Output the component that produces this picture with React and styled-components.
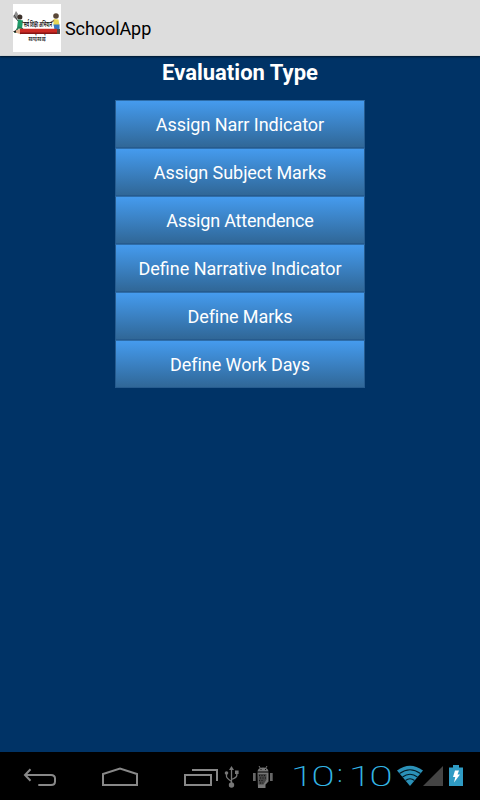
import React from 'react'
import styled, { createGlobalStyle } from 'styled-components'

const GlobalStyle = createGlobalStyle`
  * {
    box-sizing: border-box;
  }
  body {
    margin: 0;
    background: #003366;
    font-family: Roboto, "Noto Sans", sans-serif;
  }
`

const Screen = styled.div`
  display: flex;
  flex-direction: column;
  width: 480px;
  height: 800px;
  background: #003366;
  overflow: hidden;
`

const ActionBar = styled.header`
  display: flex;
  align-items: center;
  flex: none;
  height: 56px;
  padding: 0 13px;
  background: #dddddd;
  border-bottom: 1px solid #d0d3d3;
  box-shadow: 0 1px 2px rgba(0, 0, 0, .6);
`

const AppIcon = styled.svg`
  display: block;
  flex: none;
  width: 48px;
  height: 48px;
  background: #fff;
`

const AppTitle = styled.h1`
  margin: 2px 0 0 4px;
  font-size: 18px;
  font-weight: 400;
  line-height: 24px;
  letter-spacing: -.08px;
  color: #000;
`

const Content = styled.main`
  display: flex;
  flex: 1;
  flex-direction: column;
  align-items: center;
`

const Heading = styled.h2`
  margin: 2px 0 12px;
  font-size: 22px;
  font-weight: 700;
  line-height: 30px;
  color: #fff;
`

const MenuList = styled.div`
  display: flex;
  flex-direction: column;
  width: 250px;
`

const MenuButton = styled.button`
  height: 48px;
  padding: 1px 0 0;
  border: 1px solid #265b8e;
  border-top-color: #2e6da9;
  background: linear-gradient(#459bee, #306797) padding-box;
  font-family: inherit;
  font-size: 18px;
  letter-spacing: ${props => props.$tracking}px;
  color: #fff;
`

const NavBar = styled.footer`
  display: flex;
  flex: none;
  align-items: center;
  height: 48px;
  background: #000;
`

const NavIcon = styled.svg`
  display: block;
  flex: none;
  width: ${props => props.$width}px;
  height: 48px;
  fill: none;
`

const Clock = styled.div`
  display: flex;
  flex: none;
  width: 103px;
  height: 48px;
  font-family: Roboto, sans-serif;
  font-size: 28.5px;
  font-weight: 200;
  line-height: 49px;
  color: #33b5e5;
`

const Digit = styled.span`
  display: flex;
  flex: none;
  justify-content: center;
  width: ${props => props.$width}px;
  margin-left: ${props => props.$gap || 0}px;
  transform: scaleX(${props => props.$stretch || 1});
`

const Colon = styled(Digit)`
  font-size: 23px;
  font-weight: 300;
  line-height: 45px;
`

const items = [
    { label: 'Assign Narr Indicator', tracking: -.04 },
    { label: 'Assign Subject Marks', tracking: -.06 },
    { label: 'Assign Attendence', tracking: -.2 },
    { label: 'Define Narrative Indicator', tracking: 0 },
    { label: 'Define Marks', tracking: -.08 },
    { label: 'Define Work Days', tracking: -.05 }
]

function Logo(){
    return (
        <AppIcon viewBox="0 0 48 48">
            {/* left child */}
            <path d="M0 13l3-6 2 3-1 6z" fill="#8d8d8d"/>
            <path d="M1 11l4 6" stroke="#444" strokeWidth="1"/>
            <circle cx="6.8" cy="13" r="2.6" fill="#3b302a"/>
            <path d="M5 15.500l5 1-1 8H4z" fill="#1d9a68"/>
            <path d="M9 18l3 1" stroke="#5a4030" strokeWidth="1.2"/>
            <path d="M5 23l5 2M5 24l-2.500 4h6" stroke="#277a58" strokeWidth="1.8" fill="none"/>
            {/* right child */}
            <circle cx="43" cy="12" r="2.8" fill="#5a4838"/>
            <path d="M40.500 15l5 .5 1 6h-6z" fill="#e9d655"/>
            <path d="M40.500 20.500h6v5h-5z" fill="#3478c4"/>
            <path d="M41 16.500l-3.500 2" stroke="#7b5a3e" strokeWidth="1.2"/>
            {/* pencil */}
            <path d="M0 27.500l8-3v6z" fill="#e3b193"/>
            <path d="M0 27.500l3-1.200v2.400z" fill="#222"/>
            <path d="M7 24.800h37v5.200H7z" fill="#cb2a24"/>
            <path d="M7 28.600h37V30H7z" fill="#861514"/>
            <path d="M44 25h3v5h-3z" fill="#4c4c4c"/>
            <text transform="translate(11 23.4) scale(1 2.1)" fontSize="4" fontWeight="700" textLength="28" lengthAdjust="spacingAndGlyphs" fill="#222">सर्व शिक्षा अभियान</text>
            <text transform="translate(15.5 37.2) scale(1 2.5)" fontSize="2.7" fontWeight="700" textLength="17" lengthAdjust="spacingAndGlyphs" fill="#222">सब पढ़ें सब बढ़ें</text>
        </AppIcon>
    )
}

function BackIcon(){
    return (
        <NavIcon $width={80} viewBox="0 0 80 48" stroke="#888" strokeWidth="2">
            <path d="M30.500 17.300l-5.500 5.700 5.500 5.700M25 23h26q4 0 4 3.500v3q0 3.500-4 3.500H38.300"/>
        </NavIcon>
    )
}

function HomeIcon(){
    return (
        <NavIcon $width={80} viewBox="80 0 80 48" stroke="#888" strokeWidth="2">
            <path d="M103 33V22l17-5.500 17 5.500V33z"/>
        </NavIcon>
    )
}

function RecentIcon(){
    return (
        <NavIcon $width={62} viewBox="160 0 62 48" stroke="#888" strokeWidth="2">
            <path d="M185 23h26v10h-26zM192 18h25v11"/>
        </NavIcon>
    )
}

function UsbIcon(){
    return (
        <NavIcon $width={24} viewBox="222 0 24 48" stroke="#777" strokeWidth="1.3">
            <path d="M231.500 16v18M226.500 21v3.500q0 1.500 5 5M236.800 21v2.500q0 2-5.300 4"/>
            <path d="M229 18l2.500-4 2.500 4zM235 18.500h3.600v3.500H235z" fill="#777" stroke="none"/>
            <circle cx="226.500" cy="21" r="1.800" fill="#777" stroke="none"/>
            <circle cx="231.500" cy="33" r="2.700" fill="#777" stroke="none"/>
        </NavIcon>
    )
}

function DebugIcon(){
    return (
        <NavIcon $width={48} viewBox="246 0 48 48">
            <path d="M257.500 19.500q.5-4 5.500-4t5.500 4z" fill="#777"/>
            <path d="M259 14l1.500 2.500M267 14l-1.500 2.500" stroke="#777"/>
            <path d="M253 21h2.700v8H253zM270 21h2.700v8H270z" fill="#666"/>
            <path d="M257.500 20.500h11v9l-3 3V36h-7.500z" fill="#777"/>
            <path d="M258.500 22h8v5.500l-3 5h-5z" fill="#444"/>
            <path d="M259 23.500h7M260 26h6M259 28.500h5M260 31h3" stroke="#151515" strokeDasharray="1 1.500"/>
            <path d="M260.500 17.500h1M265 17.500h1" stroke="#111"/>
        </NavIcon>
    )
}

function StatusIcons(){
    return (
        <NavIcon $width={83} viewBox="397 0 83 48">
            {/* wifi */}
            <path d="M397 18.500q13-9.500 26 0L410 34z" fill="#2b91b8"/>
            <path d="M399.500 21.500q10.500-7.500 21 0M402.500 25q7.500-5.500 15 0M405.500 28.500q4.500-3.500 9 0" stroke="#041a24" strokeWidth="1.200"/>
            {/* signal */}
            <path d="M443 14v20h-20z" fill="#444"/>
            {/* battery */}
            <path d="M449 15.500h4V13h6v2.500h4V34h-14z" fill="#2f9bc4"/>
            <path d="M455 18.500h4l-1.500 4h2.500l-6 8 1.300-5.500H453z" fill="#fff"/>
        </NavIcon>
    )
}

function App(){
    return (
        <>
            <GlobalStyle/>
            <Screen>
                <ActionBar>
                    <Logo/>
                    <AppTitle>SchoolApp</AppTitle>
                </ActionBar>
                <Content>
                    <Heading>Evaluation Type</Heading>
                    <MenuList>
                        {items.map(item => (
                            <MenuButton key={item.label} $tracking={item.tracking}>{item.label}</MenuButton>
                        ))}
                    </MenuList>
                </Content>
                <NavBar>
                    <BackIcon/>
                    <HomeIcon/>
                    <RecentIcon/>
                    <UsbIcon/>
                    <DebugIcon/>
                    <Clock>
                        <Digit $width={14} $gap={1} $stretch={1.450}>1</Digit>
                        <Digit $width={22} $gap={3} $stretch={1.5}>0</Digit>
                        <Colon $width={4} $gap={4}>:</Colon>
                        <Digit $width={14} $gap={11} $stretch={1.450}>1</Digit>
                        <Digit $width={22} $gap={3} $stretch={1.5}>0</Digit>
                    </Clock>
                    <StatusIcons/>
                </NavBar>
            </Screen>
        </>
    )
}

export default App
